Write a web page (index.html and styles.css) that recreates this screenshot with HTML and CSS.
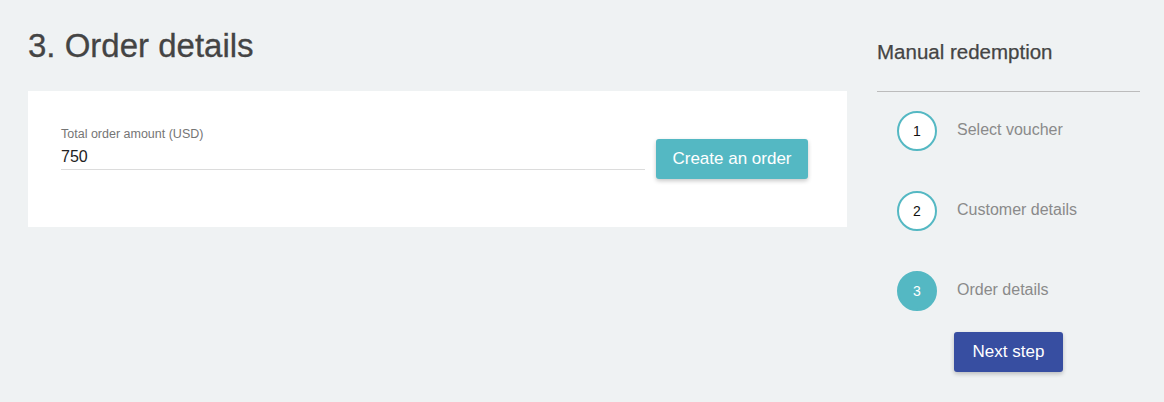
FILE: index.html
```html
<!DOCTYPE html>
<html lang="en">
<head>
<meta charset="utf-8">
<title>Order details</title>
<link rel="stylesheet" href="styles.css">
</head>
<body>
<div class="page">
  <main class="main">
    <h1 class="title">3. Order details</h1>
    <section class="card">
      <div class="field">
        <label class="field-label">Total order amount (USD)</label>
        <div class="field-input">750</div>
      </div>
      <button class="btn btn-teal">Create an order</button>
    </section>
  </main>
  <aside class="side">
    <h2 class="side-title">Manual redemption</h2>
    <div class="divider"></div>
    <ol class="steps">
      <li class="step"><span class="dot">1</span><span class="step-label">Select voucher</span></li>
      <li class="step"><span class="dot">2</span><span class="step-label">Customer details</span></li>
      <li class="step"><span class="dot dot-active">3</span><span class="step-label">Order details</span></li>
    </ol>
    <button class="btn btn-blue">Next step</button>
  </aside>
</div>
</body>
</html>
```

FILE: styles.css
```css
* { box-sizing: border-box; }
html, body { margin: 0; padding: 0; }
body {
  background: #eff2f3;
  font-family: "Liberation Sans", Arial, sans-serif;
  width: 1164px;
  height: 402px;
  overflow: hidden;
}
.page {
  display: flex;
  gap: 30px;
  padding-left: 28px;
}
.main {
  width: 819px;
}
.title {
  margin: 0;
  padding-top: 27px;
  font-size: 33px;
  line-height: 38px;
  font-weight: normal;
  color: #444;
  -webkit-text-stroke: 0.3px #444;
}
.card {
  margin-top: 26px;
  background: #ffffff;
  height: 136px;
  display: flex;
  align-items: flex-start;
  padding: 35px 39px 0 33px;
  gap: 11px;
}
.field {
  flex: 1;
  display: flex;
  flex-direction: column;
}
.field-label {
  font-size: 12.5px;
  line-height: 16px;
  color: #757575;
}
.field-input {
  margin-top: 5px;
  font-size: 16px;
  line-height: 20px;
  color: #222;
  padding-bottom: 2px;
  border-bottom: 1px solid #dcdcdc;
}
.btn {
  border: none;
  border-radius: 3px;
  height: 40px;
  color: #ffffff;
  font-family: "Liberation Sans", Arial, sans-serif;
  font-size: 17px;
  box-shadow: 0 2px 4px rgba(0, 0, 0, 0.22);
  cursor: pointer;
}
.btn-teal {
  margin-top: 13px;
  width: 152px;
  background: #54b8c3;
  padding: 0;
}
.side {
  width: 263px;
  display: flex;
  flex-direction: column;
}
.side-title {
  margin: 0;
  padding-top: 40px;
  font-size: 20.5px;
  line-height: 24px;
  font-weight: normal;
  color: #444;
  -webkit-text-stroke: 0.25px #444;
}
.divider {
  margin-top: 27px;
  height: 1px;
  background: #bcbcbc;
}
.steps {
  list-style: none;
  margin: 0;
  padding: 19px 0 0 20px;
  display: flex;
  flex-direction: column;
  gap: 40px;
}
.step {
  display: flex;
  align-items: center;
  gap: 20px;
  height: 40px;
}
.dot {
  width: 40px;
  height: 40px;
  border-radius: 50%;
  border: 2px solid #54b8c3;
  background: #ffffff;
  color: #111;
  font-size: 14px;
  display: flex;
  align-items: center;
  justify-content: center;
  flex-shrink: 0;
}
.dot-active {
  background: #54b8c3;
  color: #ffffff;
}
.step-label {
  font-size: 16px;
  color: #8a8a8a;
  margin-top: -3px;
}
.btn-blue {
  margin-top: 21px;
  margin-left: 77px;
  width: 109px;
  background: #374ea1;
  padding: 0;
}
```
